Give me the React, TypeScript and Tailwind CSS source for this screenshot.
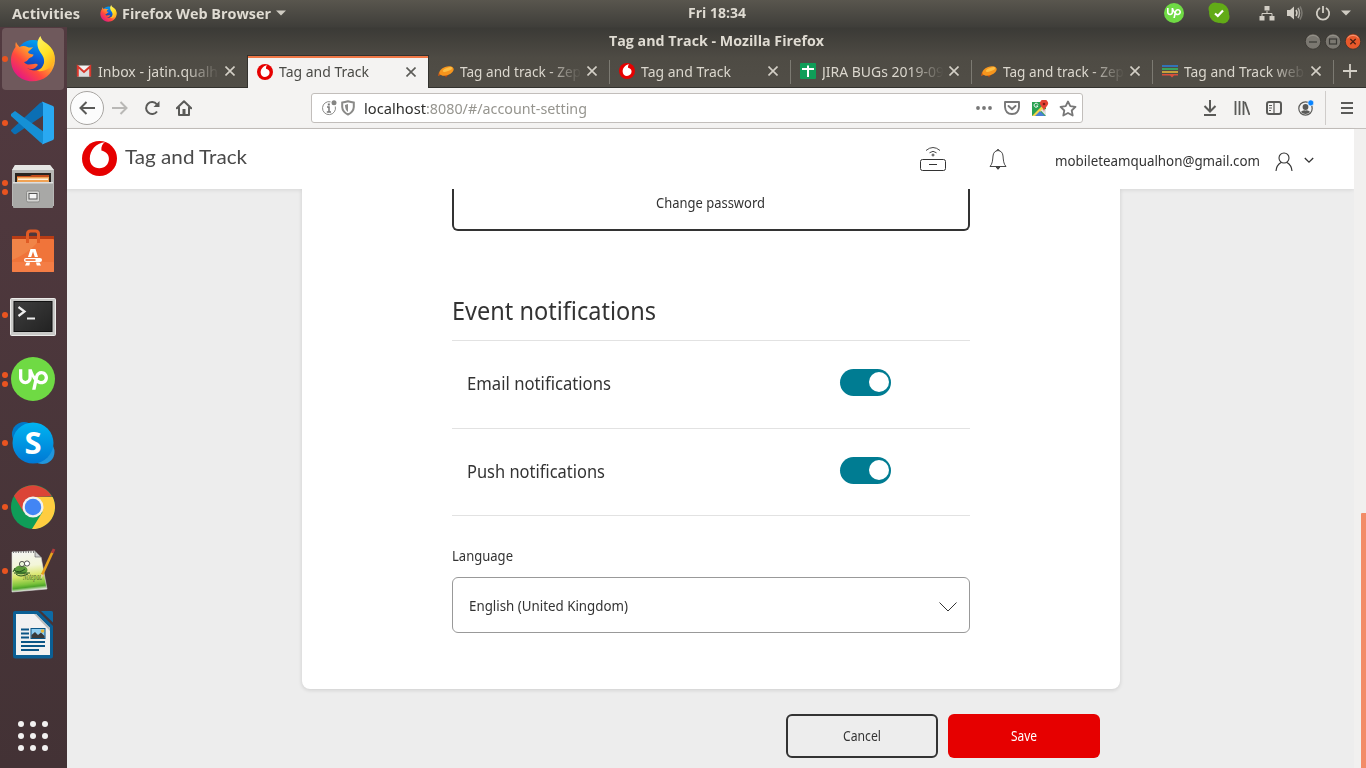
import React, { useLayoutEffect, useRef } from "react";
import { SiUpwork } from "react-icons/si";

/** Single line of text set to an exact measure by condensing its glyphs. */
function Fit({ w, children, className = "" }: { w: number; children: string; className?: string }) {
  const ref = useRef<HTMLSpanElement>(null);
  useLayoutEffect(() => {
    const el = ref.current;
    if (!el) return;
    el.style.transform = "none";
    const natural = el.getBoundingClientRect().width;
    if (natural > 0) el.style.transform = `scaleX(${w / natural})`;
  }, [w, children]);
  return (
    <span className={`block shrink-0 whitespace-nowrap ${className}`} style={{ width: w }}>
      <span ref={ref} className="inline-block origin-left">{children}</span>
    </span>
  );
}

function VodafoneMark({ size, badge = false }: { size: number; badge?: boolean }) {
  return (
    <svg width={size} height={size} viewBox="0 0 35 35" className="shrink-0">
      <circle cx="17.5" cy="17.5" r="17.5" fill="#e60000" />
      {badge ? (
        <path d="M22.5 3C14 4 8 11 8 18.5C8 24.5 12 28.5 17.5 28.5C23.5 28.5 27.5 24 27.5 18.8C27.5 14 24 11.5 19.8 10.5C19.5 7 20.5 4.5 22.5 3Z" fill="#fff" />
      ) : (
        <path d="M23 1.3C14 2 7.8 9.5 7.8 17.5C7.8 23.3 11.7 27.3 17.3 27.3C23 27.3 26.9 23.1 26.9 18C26.9 13.3 24 10.6 19.4 9.5C19 5.7 20.4 2.7 23 1.3Z" fill="#fff" />
      )}
    </svg>
  );
}

function Firefox({ size, id }: { size: number; id: string }) {
  return (
    <svg width={size} height={size} viewBox="0 0 46 46" className="shrink-0">
      <defs>
        <linearGradient id={`${id}a`} x1="0.9" y1="0.1" x2="0.15" y2="0.9">
          <stop offset="0" stopColor="#fff44f" />
          <stop offset="0.35" stopColor="#ffa62b" />
          <stop offset="0.65" stopColor="#ff4a3d" />
          <stop offset="1" stopColor="#e31587" />
        </linearGradient>
        <linearGradient id={`${id}b`} x1="0.7" y1="0" x2="0.4" y2="1">
          <stop offset="0" stopColor="#00a8f0" />
          <stop offset="0.5" stopColor="#0a60dc" />
          <stop offset="1" stopColor="#272b85" />
        </linearGradient>
        <linearGradient id={`${id}c`} x1="0" y1="0" x2="0.5" y2="1">
          <stop offset="0" stopColor="#fff36b" />
          <stop offset="0.6" stopColor="#ffe226" />
          <stop offset="1" stopColor="#ffb01f" />
        </linearGradient>
      </defs>
      <circle cx="23" cy="21" r="17" fill={`url(#${id}b)`} />
      <path d="M6 6C7 8 8 9.500 9.500 11C12 9.500 15 9.500 17.500 11C19 11.500 20 12 23 11C22 13 19.500 14 18 16C18.500 18 21 18 23.500 18.500C23.500 21 19.500 21.500 18.500 23C17.500 25 15.500 26 14 26C17 30 21 28 24 28C27 27 29 28.500 27 30C24 33.500 20 34 17 32C22 36 30 35 33.500 30C37 24 35 18 31 15L36 8C43 13 46 20 44.500 28C42 39 33 45.500 22 45.300C10 45 1 36 1 24C1 18 4 13 5.500 11C5.300 9 5.500 7 6 6Z" fill={`url(#${id}a)`} />
      <path d="M30.500 0C27 4 26.500 9 29 14C31 18 35 21 34 27C33 31 30 34 27 35C35 36 42 32 44.500 25C46 15 40 10 36 7C33 5 31 3 30.500 0Z" fill={`url(#${id}c)`} />
    </svg>
  );
}

function VSCode() {
  return (
    <svg width="44" height="44" viewBox="0 0 44 44">
      <path d="M0 29L29 2Q31 0.500 33 1V14L5 33Q3.500 34 2 32L0 30Z" fill="#0b6fb4" />
      <path d="M0 13L4 10L33 31V43Q31 43 29 41L0 15Z" fill="#1590d5" />
      <path d="M31 0.500L42 5Q43 5.500 43 7V37Q43 38.500 42 39L31 43.500L32 41V3Z" fill="#29a9f2" />
    </svg>
  );
}

function Files() {
  return (
    <svg width="46" height="46" viewBox="0 0 46 46">
      <path d="M5 1H40L44 6V42H2V6Z" fill="#b7b7b5" />
      <path d="M5 1H40L44 6H2Z" fill="#e6e6e4" />
      <rect x="5" y="9" width="36" height="12" fill="#2a2420" />
      <path d="M7 12H20L22 11H39V20H7Z" fill="#c34c1d" />
      <rect x="7" y="13" width="32" height="7" fill="#f0a254" />
      <rect x="8" y="14.500" width="30" height="1.500" fill="#fff3df" />
      <rect x="3" y="18" width="40" height="26" rx="1" fill="#a8a8a6" />
      <rect x="3" y="18" width="40" height="1.500" fill="#dedede" />
      <rect x="16.500" y="27" width="13" height="11" rx="1.500" fill="#d5d5d3" stroke="#8b8b89" />
      <rect x="19" y="29.500" width="8" height="5.500" fill="#f4f4f4" stroke="#555" />
    </svg>
  );
}

function Software() {
  return (
    <svg width="46" height="46" viewBox="0 0 46 46">
      <path d="M2 8H44V16H2Z" fill="#b83c15" />
      <rect x="2" y="11" width="42" height="33" rx="1" fill="#f0743a" />
      <path d="M2 11H30Q20 25 2 32Z" fill="#f29154" opacity=".55" />
      <rect x="2" y="34" width="42" height="10" rx="1" fill="#f47d45" />
      <path d="M17.500 15V6Q17.500 3 20.500 3H25.500Q28.500 3 28.500 6V15" fill="none" stroke="#e05b25" strokeWidth="3" />
      <path d="M20.500 21H25.500L28 29H24.800L23 23.500L21.200 29H18Z" fill="#fff" />
      <path d="M16.500 34.500H20L19.300 37.500H15ZM26 34.500H29.500L31 37.500H26.800Z" fill="#fff" />
      <rect x="14" y="30" width="18" height="4" rx="2" fill="#fff" />
      <rect x="15.500" y="31.200" width="10" height="1.600" fill="#ed6a30" />
    </svg>
  );
}

function TerminalIcon() {
  return (
    <svg width="46" height="40" viewBox="0 0 46 40" className="mt-[3px]">
      <defs>
        <linearGradient id="term" x1="0" y1="0" x2="1" y2="1">
          <stop offset="0" stopColor="#3e3e3e" />
          <stop offset="1" stopColor="#222" />
        </linearGradient>
      </defs>
      <rect x="0.500" y="1.500" width="45" height="37" rx="1" fill="#c9c9c7" stroke="#ececea" />
      <rect x="4" y="4.500" width="38" height="30" fill="url(#term)" stroke="#111" />
      <path d="M8.500 10L14.500 14.500L8.500 19" fill="none" stroke="#eee" strokeWidth="2.200" />
      <rect x="17" y="20.500" width="8" height="2" fill="#eee" />
    </svg>
  );
}

function Skype() {
  return (
    <svg width="44" height="44" viewBox="0 0 44 44">
      <defs>
        <linearGradient id="sky" x1="0" y1="0" x2="0" y2="1">
          <stop offset="0" stopColor="#00b4f1" />
          <stop offset="1" stopColor="#0078d4" />
        </linearGradient>
      </defs>
      <circle cx="13" cy="13" r="12" fill="#0078c8" />
      <circle cx="31.500" cy="31" r="12" fill="#2196dc" />
      <circle cx="22" cy="22" r="20.500" fill="url(#sky)" />
      <text x="22" y="33" textAnchor="middle" fontFamily="Open Sans, sans-serif" fontWeight="700" fontSize="31" fill="#fff">S</text>
    </svg>
  );
}

function Chrome() {
  return (
    <svg width="46" height="46" viewBox="0 0 46 46">
      <circle cx="23" cy="23" r="22" fill="#0f9d58" />
      <path d="M4 12A22 22 0 0 1 42 12.500L23 13L13.500 28Z" fill="#db4437" />
      <path d="M23 13H42.600A22 22 0 0 1 22 45L32.500 28Z" fill="#ffcd40" />
      <circle cx="23" cy="23" r="10.500" fill="#f1f1f1" />
      <circle cx="23" cy="23" r="8.200" fill="#4285f4" />
    </svg>
  );
}

function Notepad() {
  return (
    <svg width="46" height="46" viewBox="0 0 46 46">
      <defs>
        <linearGradient id="np" x1="0" y1="0" x2="0.100" y2="1">
          <stop offset="0" stopColor="#f5f5f5" />
          <stop offset="0.400" stopColor="#f3f6d8" />
          <stop offset="0.650" stopColor="#d9e66a" />
          <stop offset="0.850" stopColor="#7cc43c" />
          <stop offset="0.920" stopColor="#4fa52a" />
          <stop offset="1" stopColor="#dfe8d8" />
        </linearGradient>
      </defs>
      <path d="M2 4L25 3L31 9L37 41L2 44Z" fill="url(#np)" stroke="#ddd" strokeWidth=".6" />
      <path d="M25 3V9H31Z" fill="#cfcfcf" stroke="#555" strokeWidth=".6" />
      <path d="M3 4H25" stroke="#777" strokeWidth="2" strokeDasharray="1 1.500" />
      <ellipse cx="11" cy="22" rx="6.500" ry="4.500" fill="#5b9b3a" />
      <circle cx="17" cy="15.500" r="2.600" fill="#fff" stroke="#333" strokeWidth=".8" />
      <circle cx="12" cy="16" r="2.600" fill="#e9f5da" stroke="#333" strokeWidth=".8" />
      <path d="M4 22Q9 26 15 21M6 26Q10 30 18 26M5 20L3 24M4 25H20" fill="none" stroke="#214e1c" strokeWidth="1" />
      <text x="13" y="32" fontFamily="Liberation Serif, serif" fontStyle="italic" fontSize="11" fill="#526a2e" textLength="19" lengthAdjust="spacingAndGlyphs">Notepad</text>
      <path d="M32 27L42.500 4" stroke="#e9a21d" strokeWidth="2.600" />
      <path d="M42.300 5L44 1" stroke="#b03c3c" strokeWidth="2.800" />
      <path d="M31 31L31 26L33.500 27Z" fill="#e8cfa3" />
    </svg>
  );
}

function Writer() {
  return (
    <svg width="42" height="50" viewBox="0 0 42 50">
      <path d="M3 1H26L41 16V46Q41 48.500 38.500 48.500H3.500Q1 48.500 1 46V3Q1 1 3 1Z" fill="#0b5f94" />
      <path d="M29 1H39.500Q41 1 41 2.500V12.500Z" fill="#0e6ba5" />
      <path d="M4 4H24L38 18V45H4Z" fill="#f1f1f1" />
      <path d="M24 4V4L38 18V21L22 4Z" fill="#bcbcbc" />
      <path d="M9 19.500H17M9 23.500H17M9 27.500H17M9 32H33M9 36H33M9 40H27" stroke="#0b5585" strokeWidth="2" />
      <rect x="19" y="18.500" width="14" height="10" fill="#8fcdf0" stroke="#0b5585" />
      <path d="M19.500 28V25L23 22L26 25L29 22.500L32.500 26V28Z" fill="#3b3b3b" />
      <circle cx="30.500" cy="21" r="1.800" fill="#e8b93b" />
    </svg>
  );
}

function DockItem({ dots, active, children }: { dots: number; active?: boolean; children: React.ReactNode }) {
  return (
    <div className="flex h-16 w-[67px] items-center">
      <div className={`relative ml-[2px] flex h-[62px] w-[62px] items-center justify-center rounded-[4px] ${active ? "bg-[#6f595c]" : ""}`}>
        {children}
        <div className="absolute top-0 left-0 flex h-full flex-col justify-center gap-[3px]">
          {Array.from({ length: dots }).map((_, i) => (
            <span key={i} className="block h-[6px] w-[6px] rounded-full bg-[#e95420]" />
          ))}
        </div>
      </div>
    </div>
  );
}

function Dock() {
  return (
    <aside className="flex w-[67px] shrink-0 flex-col bg-gradient-to-b from-[#523a40] to-[#433235]">
      <DockItem dots={1} active><Firefox size={46} id="ffd" /></DockItem>
      <DockItem dots={1}><VSCode /></DockItem>
      <DockItem dots={2}><Files /></DockItem>
      <DockItem dots={0}><Software /></DockItem>
      <DockItem dots={1}><TerminalIcon /></DockItem>
      <DockItem dots={2}>
        <div className="flex h-11 w-11 items-center justify-center rounded-full bg-[#6fda44]">
          <SiUpwork size={29} color="#fff" />
        </div>
      </DockItem>
      <DockItem dots={1}><Skype /></DockItem>
      <DockItem dots={1}><Chrome /></DockItem>
      <DockItem dots={1}><Notepad /></DockItem>
      <DockItem dots={0}><Writer /></DockItem>
      <div className="ml-[18px] mt-[54px] grid w-[30px] grid-cols-3 gap-[6px]">
        {Array.from({ length: 9 }).map((_, i) => (
          <span key={i} className="h-[6px] w-[6px] rounded-full bg-[#f2f1f0]" />
        ))}
      </div>
    </aside>
  );
}

function TopBar() {
  return (
    <header className="flex h-7 shrink-0 items-center bg-gradient-to-b from-[#59564e] to-[#3e3d39] pb-[2px] font-['Open_Sans',sans-serif] text-[14px] font-bold text-[#dfdbd2]">
      <Fit w={68} className="ml-3">Activities</Fit>
      <div className="ml-5 flex"><Firefox size={17} id="fft" /></div>
      <Fit w={149} className="ml-[5px]">Firefox Web Browser</Fit>
      <svg width="10" height="6" className="ml-[5px]"><path d="M0 0.500H10L5 5.500Z" fill="#cfcbc2" /></svg>
      <Fit w={58} className="ml-[402px] pb-px">Fri 18:34</Fit>
      <div className="ml-[418px] flex h-5 w-5 items-center justify-center rounded-full bg-[#6fda44]">
        <SiUpwork size={14} color="#fff" />
      </div>
      <svg width="22" height="22" viewBox="0 0 22 22" className="ml-6">
        <circle cx="7" cy="7" r="6.500" fill="#62ab17" />
        <circle cx="15" cy="15" r="6.500" fill="#62ab17" />
        <circle cx="11" cy="11" r="10" fill="#62ab17" />
        <path d="M7 11.500L9.800 14L15 8.500" fill="none" stroke="#fff" strokeWidth="2.200" />
      </svg>
      <svg width="16" height="16" viewBox="0 0 16 16" className="ml-[29px]">
        <path d="M5.500 1H10.500V5.500H5.500ZM0.500 11H5.500V15.500H0.500ZM10.500 11H15.500V15.500H10.500Z" fill="#d2cec5" />
        <path d="M8 6V8.500M3 11V8.500H13V11" fill="none" stroke="#d2cec5" />
      </svg>
      <svg width="16" height="16" viewBox="0 0 16 16" className="ml-3">
        <path d="M0 5H3L7 1.500V14.500L3 11H0Z" fill="#d2cec5" />
        <path d="M9 5Q11 8 9 11" fill="none" stroke="#d2cec5" strokeWidth="1.500" />
        <path d="M11 3Q14 8 11 13" fill="none" stroke="#b4b1a9" strokeWidth="1.500" />
        <path d="M13 1.500Q17 8 13 14.500" fill="none" stroke="#7b7972" strokeWidth="1.500" />
      </svg>
      <svg width="16" height="16" viewBox="0 0 16 16" className="ml-3">
        <path d="M5 3A6.200 6.200 0 1 0 11 3" fill="none" stroke="#d2cec5" strokeWidth="1.800" />
        <path d="M8 1V8" stroke="#d2cec5" strokeWidth="1.800" />
      </svg>
      <svg width="10" height="6" className="ml-[10px]"><path d="M0 0.500H10L5 5.500Z" fill="#cfcbc2" /></svg>
    </header>
  );
}

function WindowButton({ kind }: { kind: "min" | "max" | "close" }) {
  const close = kind === "close";
  return (
    <svg width="16" height="17" viewBox="0 0 16 17">
      <circle cx="8" cy="8.500" r="7.700" fill={close ? "#e9592b" : "#7b7871"} stroke="#373530" strokeWidth=".8" />
      <path d="M2.500 5A7 7 0 0 1 13.500 5" stroke={close ? "#f49a78" : "#96938b"} fill="none" />
      {kind === "min" && <path d="M4 9H12" stroke="#3a3935" strokeWidth="1.200" />}
      {kind === "max" && <rect x="4.500" y="6" width="7" height="5" fill="none" stroke="#3a3935" strokeWidth="1.200" />}
      {close && <path d="M5.300 6L10.700 11.200M10.700 6L5.300 11.200" stroke="#4a2115" strokeWidth="1.300" />}
    </svg>
  );
}

const Gmail = () => (
  <svg width="16" height="16" viewBox="0 0 16 16">
    <rect x="1" y="2.500" width="14" height="11" rx="1" fill="#f2f2f2" />
    <path d="M3 4L8 8.500L13 4V13.500H3Z" fill="#dcdcdc" />
    <path d="M1.800 13.500V3.500L8 9L14.200 3.500V13.500" fill="none" stroke="#d9382c" strokeWidth="2" />
  </svg>
);
const Zeplin = () => (
  <svg width="16" height="16" viewBox="0 0 16 16">
    <path d="M1 9L0 13L4 11.500Z" fill="#d35d12" />
    <path d="M6 12L8 14.500L10 12Z" fill="#b4470e" />
    <ellipse cx="8.500" cy="8" rx="7.500" ry="4.300" transform="rotate(-20 8.500 8)" fill="#f6951d" />
    <ellipse cx="9.500" cy="6.500" rx="5" ry="1.700" transform="rotate(-20 9.500 6.500)" fill="#fdbf45" />
  </svg>
);
const Sheets = () => (
  <svg width="16" height="16" viewBox="0 0 16 16">
    <rect width="16" height="16" rx="1" fill="#0f9d58" />
    <path d="M2 6H14M8 2.500V14" stroke="#fff" strokeWidth="2" />
  </svg>
);
const Stripes = () => (
  <svg width="16" height="16" viewBox="0 0 16 16">
    <path d="M0 3H16" stroke="#3272b8" strokeWidth="2" />
    <path d="M0 6H16" stroke="#3aa35c" strokeWidth="2" />
    <path d="M0 9H16" stroke="#c5a13c" strokeWidth="2" />
    <path d="M0 11H16V12.500H12L10 14.500L8 12.500H0Z" fill="#d9503c" />
  </svg>
);

type TabData = { title: string; w: number; icon: React.ReactNode; active?: boolean; fade?: boolean; line?: boolean };
const tabs: TabData[] = [
  { title: "Inbox - jatin.qualh", w: 120, icon: <Gmail />, fade: true },
  { title: "Tag and Track", w: 90, icon: <VodafoneMark size={16} badge />, active: true },
  { title: "Tag and track - Zep", w: 121, icon: <Zeplin />, fade: true, line: true },
  { title: "Tag and Track", w: 90, icon: <VodafoneMark size={16} badge />, line: true },
  { title: "JIRA BUGs 2019-09", w: 122, icon: <Sheets />, fade: true, line: true },
  { title: "Tag and track - Zep", w: 121, icon: <Zeplin />, fade: true, line: true },
  { title: "Tag and Track web", w: 120, icon: <Stripes />, fade: true, line: true },
];

function Tab({ t }: { t: TabData }) {
  const look = t.active
    ? "-ml-px w-[182px] border-x border-t border-[#33322e] bg-[#f4f3f2] text-[#4a4a46]"
    : "w-[181px] border-b border-[#33322e] text-[#dbd7ce]";
  return (
    <div className={`relative flex h-[33px] shrink-0 items-center ${look}`}>
      {t.active && <div className="absolute inset-x-0 top-0 h-[2px] bg-[#f07746]" />}
      <div className="ml-[9px] flex">{t.icon}</div>
      <div className={`ml-[6px] w-[124px] overflow-hidden ${t.active ? "" : "pt-px"} ${t.fade ? "[mask-image:linear-gradient(to_right,#000_70%,transparent_98%)]" : ""}`}>
        <Fit w={t.w}>{t.title}</Fit>
      </div>
      <svg width="10" height="10" className="ml-[3px]">
        <path d="M0.500 0.500L9.500 9.500M9.500 0.500L0.500 9.500" stroke={t.active ? "#5c5c58" : "#d3cfc6"} strokeWidth="1.600" />
      </svg>
      {t.line && <div className="absolute top-[5px] right-0 h-6 w-px bg-[#7c7a72]" />}
    </div>
  );
}

function WindowFrame() {
  return (
    <div className="flex h-[60px] shrink-0 flex-col bg-gradient-to-b from-[#3b3a36] via-[#4e4b44] via-50% to-[#514e47] font-['Noto_Sans',sans-serif]">
      <div className="flex h-[27px] shrink-0 items-center pb-px text-[14px] font-bold text-[#dfdbd2]">
        <Fit w={215} className="ml-[542px] pb-px font-['Open_Sans',sans-serif]">Tag and Track - Mozilla Firefox</Fit>
        <div className="ml-[481px] flex gap-1"><WindowButton kind="min" /><WindowButton kind="max" /><WindowButton kind="close" /></div>
      </div>
      <div className="flex h-[33px] text-[14.500px]">
        {tabs.map((t, i) => <Tab key={i} t={t} />)}
        <div className="flex flex-1 items-center justify-center border-b border-[#33322e]">
          <svg width="14" height="14"><path d="M7 0V14M0 7H14" stroke="#d3cfc6" strokeWidth="1.800" /></svg>
        </div>
      </div>
    </div>
  );
}

const ICON = "#5a5a58";

function Toolbar() {
  return (
    <div className="flex h-[41px] shrink-0 items-center border-b border-[#c4c0bd] bg-[#f4f3f2]">
      <div className="ml-[3px] flex h-[34px] w-[34px] items-center justify-center rounded-full border border-[#a8a5a2] bg-[#fcfcfc]">
        <svg width="16" height="14"><path d="M16 7H1.500M7.500 1L1.500 7L7.500 13" fill="none" stroke={ICON} strokeWidth="2" /></svg>
      </div>
      <svg width="16" height="14" className="ml-2"><path d="M0 7H14.500M8.500 1L14.500 7L8.500 13" fill="none" stroke="#b9b8b6" strokeWidth="2" /></svg>
      <svg width="16" height="16" className="ml-4">
        <path d="M13 11.500A6 6 0 1 1 12.800 4.300" fill="none" stroke={ICON} strokeWidth="2" />
        <path d="M15.500 1V7H9.500Z" fill={ICON} />
      </svg>
      <svg width="16" height="16" viewBox="0 0 16 16" className="ml-4">
        <path d="M0.800 8.200L8 1.200L15.200 8.200M3 7.500V15H13V7.500" fill="none" stroke={ICON} strokeWidth="2" strokeLinejoin="round" strokeLinecap="round" />
        <path d="M6.500 9H9.500V15H6.500Z" fill={ICON} />
      </svg>
      <div className="ml-[119px] flex h-[30px] w-[772px] items-center rounded-[3px] border border-[#c2bebb] bg-white">
        <svg width="16" height="16" viewBox="0 0 16 16" className="ml-[9px]">
          <path d="M9.500 1.800A6.500 6.500 0 1 0 14.300 6.500" fill="none" stroke="#8a8a88" strokeWidth="1" />
          <path d="M6 7H8V12M5.800 12H10" fill="none" stroke="#777" strokeWidth="1.500" />
          <rect x="6.800" y="3.500" width="2" height="2" fill="#777" />
          <circle cx="13" cy="2.700" r="2.500" fill="#858583" />
        </svg>
        <svg width="14" height="16" viewBox="0 0 14 16" className="ml-1">
          <path d="M1.200 2.500Q4 2 7 1.200Q10 2 12.800 2.500V7Q12.500 12 7 14.500Q1.500 12 1.200 7Z" fill="none" stroke="#8a8a88" strokeWidth="2" />
          <path d="M7 4V12Q4 10 4 5Z" fill="#8a8a88" />
        </svg>
        <div className="ml-[9px] flex font-['Noto_Sans',sans-serif] text-[14.500px] leading-5">
          <Fit w={62} className="text-[#2e2e2c]">localhost</Fit>
          <Fit w={161} className="text-[#96958f]">:8080/#/account-setting</Fit>
        </div>
        <svg width="16" height="4" className="ml-[389px]"><circle cx="2" cy="2" r="1.900" fill="#777" /><circle cx="8" cy="2" r="1.900" fill="#777" /><circle cx="14" cy="2" r="1.900" fill="#777" /></svg>
        <svg width="16" height="14" viewBox="0 0 16 14" className="ml-3">
          <path d="M1 1H15V6Q14.500 13 8 13Q1.500 13 1 6Z" fill="none" stroke="#777" strokeWidth="1.900" strokeLinejoin="round" />
          <path d="M4.500 5L8 8.300L11.500 5" fill="none" stroke="#777" strokeWidth="1.900" strokeLinecap="round" />
        </svg>
        <svg width="17" height="17" viewBox="0 0 17 17" className="ml-3">
          <rect x="0" y="2" width="14" height="14" fill="#2aa152" />
          <path d="M14 2L0 16H4L14 7Z" fill="#f4d44c" />
          <path d="M3 16L8 11L13 16Z" fill="#4a7fd6" />
          <path d="M8.500 10L14 16V9Z" fill="#e5e5e5" />
          <path d="M6 4.500A2 2 0 1 0 6 6H4.300" fill="none" stroke="#fff" />
          <path d="M12 12Q11.500 8 9 6A4 4 0 1 1 15 6Q12.500 8 12 12Z" fill="#e34133" />
          <circle cx="12" cy="4" r="1.300" fill="#7d1c16" />
        </svg>
        <svg width="18" height="17" viewBox="0 0 18 17" className="ml-[10px]">
          <path d="M9 1.500L11.300 6.200L16.500 6.900L12.700 10.500L13.700 15.500L9 13L4.300 15.500L5.300 10.500L1.500 6.900L6.700 6.200Z" fill="none" stroke="#777" strokeWidth="1.800" strokeLinejoin="round" />
        </svg>
      </div>
      <svg width="14" height="16" className="ml-[120px]"><path d="M7 0V11M1.500 6L7 11.500L12.500 6M1 15H13" fill="none" stroke={ICON} strokeWidth="2" /></svg>
      <svg width="16" height="14" className="ml-[17px]"><path d="M1.500 0V14M5.500 0V14M9.500 0V14M11 1L15.500 14" fill="none" stroke={ICON} strokeWidth="1.800" /></svg>
      <svg width="16" height="14" viewBox="0 0 16 14" className="ml-4">
        <rect x="1" y="1" width="14" height="12" rx="2" fill="none" stroke={ICON} strokeWidth="2" />
        <path d="M8 1V13M3 4.500H6M3 7H6M3 9.500H5" stroke={ICON} strokeWidth="1.200" />
      </svg>
      <svg width="17" height="16" viewBox="0 0 17 16" className="ml-4">
        <circle cx="7.500" cy="8.500" r="6.700" fill="none" stroke={ICON} strokeWidth="1.200" />
        <circle cx="7.500" cy="7" r="2.900" fill={ICON} />
        <path d="M2.800 12Q5 9.800 7.500 10.500Q10 9.800 12.200 12Q7.500 16 2.800 12Z" fill={ICON} />
        <circle cx="12.800" cy="2.900" r="3" fill="#0a84ff" stroke="#f4f3f2" strokeWidth=".7" />
      </svg>
      <div className="ml-[10px] h-[34px] w-px bg-[#cfccca]" />
      <svg width="12" height="12" className="ml-[15px]"><path d="M0 1H12M0 6H12M0 11H12" stroke={ICON} strokeWidth="2" /></svg>
    </div>
  );
}

function PageHeader() {
  return (
    <div className="relative flex h-[60px] w-[1287px] shrink-0 items-center bg-white shadow-[0_1px_4px_rgba(0,0,0,0.10)]">
      <div className="ml-[15px] flex pb-[2px]"><VodafoneMark size={35} /></div>
      <Fit w={122} className="ml-2 pb-[6px] font-['Lato',sans-serif] text-[20px] text-[#4a4a4a]">Tag and Track</Fit>
      <svg width="26" height="26" viewBox="0 0 26 26" className="ml-[673px]" fill="none" stroke="#333" strokeWidth="1">
        <rect x="0.500" y="13.500" width="25" height="11" rx="2" />
        <path d="M9 18.500H17" />
        <path d="M6 4.500Q13 -1.500 20 4.500M9.500 6.800Q13 3.800 16.500 6.800" strokeWidth=".9" />
        <path d="M13 7.500V10.500M11.500 9H14.500" strokeWidth=".9" />
      </svg>
      <svg width="18" height="22" viewBox="0 0 18 22" className="ml-[43px]" fill="none" stroke="#333" strokeWidth="0.900">
        <path d="M1 18.500C3.500 16 3.600 12 4 8Q4.500 3 9 2.500Q13.500 3 14 8C14.400 12 14.500 16 17 18.500Z" strokeLinejoin="round" />
        <path d="M7.500 2.500Q9 0 10.500 2.500" />
        <path d="M7.200 19.200H10.800L9 21.300Z" fill="#333" />
      </svg>
      <Fit w={205} className="ml-[48px] mt-[3px] font-['Noto_Sans',sans-serif] text-[15px] text-[#333]">mobileteamqualhon@gmail.com</Fit>
      <svg width="18" height="20" viewBox="0 0 18 20" className="mt-[5px] ml-[15px]" fill="none" stroke="#333" strokeWidth="1.100">
        <circle cx="9" cy="6" r="5" />
        <path d="M1 19Q1.500 13 6 10.500M17 19Q16.500 13 12 10.500" />
      </svg>
      <svg width="10" height="7" className="mt-[2px] ml-[11px]"><path d="M0.800 1L5 5.200L9.200 1" fill="none" stroke="#333" strokeWidth="1.300" /></svg>
    </div>
  );
}

function Toggle() {
  return (
    <div className="flex h-[27px] w-[51px] items-center justify-end rounded-full bg-[#007c92] pr-[2px] pb-px">
      <span className="h-5 w-5 rounded-full bg-white" />
    </div>
  );
}

function ToggleRow({ label, w, tall }: { label: string; w: number; tall?: boolean }) {
  return (
    <div className={`flex items-start border-b border-[#e2e2e2] pt-7 pl-[15px] ${tall ? "h-[88px]" : "h-[87px]"}`}>
      <div className="flex h-7 w-[373px] items-center"><Fit w={w} className="text-[18.500px] leading-7">{label}</Fit></div>
      <Toggle />
    </div>
  );
}

function Page() {
  return (
    <main className="relative flex min-h-0 flex-1 flex-col bg-[#ededed] font-['Noto_Sans',sans-serif] text-[#333]">
      <PageHeader />
      <div className="ml-[235px] h-[500px] w-[818px] shrink-0 rounded-b-lg bg-white px-[150px] shadow-[0_1px_4px_rgba(0,0,0,0.14)] [clip-path:inset(0_-8px_-8px_-8px)]">
        <div className="flex h-[42px] w-[518px] justify-center rounded-b-[6px] border-x-2 border-b-2 border-[#333] pt-[2px] pr-px text-[14.500px] leading-[22px]">
          <Fit w={109}>Change password</Fit>
        </div>
        <h2 className="flex h-[110px] items-end border-b border-[#e2e2e2] pb-[11px] text-[26px] leading-[38px]"><Fit w={204}>Event notifications</Fit></h2>
        <ToggleRow label="Email notifications" w={144} tall />
        <ToggleRow label="Push notifications" w={138} />
        <div className="mt-[29px] text-[14.500px] leading-[20px]"><Fit w={61}>Language</Fit></div>
        <div className="mt-3 flex h-14 w-[518px] items-center justify-between rounded-[6px] border border-[#999] pr-3 pl-4 text-[14.500px]">
          <Fit w={159} className="pt-[2px]">English (United Kingdom)</Fit>
          <svg width="18" height="10" className="mt-[3px]"><path d="M0.500 0.500L9 9L17.500 0.500" fill="none" stroke="#333" strokeWidth="1" /></svg>
        </div>
      </div>
      <div className="mt-[25px] ml-[719px] flex gap-[10px] text-[13.500px]">
        <button className="flex h-11 w-[152px] items-center justify-center rounded-[6px] border-2 border-[#333]"><Fit w={38}>Cancel</Fit></button>
        <button className="flex h-11 w-[152px] items-center justify-center rounded-[6px] bg-[#e60000] text-white"><Fit w={26}>Save</Fit></button>
      </div>
      <div className="absolute top-0 right-0 flex h-full w-3 flex-col items-end justify-end bg-[#f1f0ef]">
        <div className="h-[255px] w-[5px] rounded-tl-[1px] bg-[#f28c68]" />
      </div>
    </main>
  );
}

export default function App() {
  return (
    <div className="flex h-[768px] w-[1366px] flex-col overflow-hidden">
      <TopBar />
      <div className="-mt-px flex min-h-0 flex-1">
        <Dock />
        <div className="flex min-w-0 flex-1 flex-col">
          <div className="h-px shrink-0 bg-[#3d3c38]" />
          <WindowFrame />
          <Toolbar />
          <Page />
        </div>
      </div>
    </div>
  );
}
